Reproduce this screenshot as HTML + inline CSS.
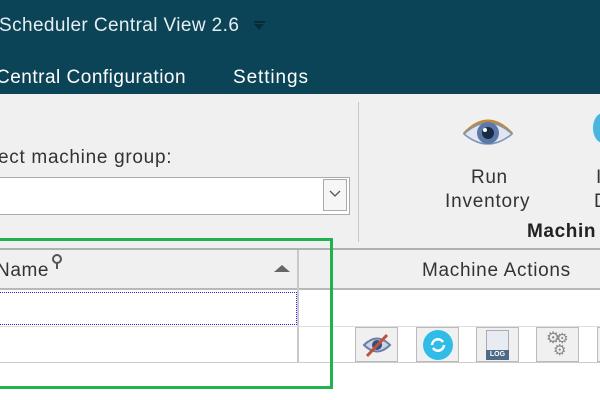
<!DOCTYPE html>
<html><head><style>
*{margin:0;padding:0;box-sizing:border-box}
body{width:600px;height:400px;overflow:hidden;background:#fff;font-family:"Liberation Sans",sans-serif;position:relative;color:#333}
#w{position:absolute;left:0;top:0;width:600px;height:400px;overflow:hidden}
.a{position:absolute;white-space:nowrap}
.t{font-size:19px;letter-spacing:0.6px}
</style></head><body><div id="w">
<div class="a" style="left:0;top:0;width:600px;height:94px;background:#0b4456"></div>
<div class="a" style="left:-1px;top:15px;font-size:19px;letter-spacing:0.4px;color:#e6eef1">Scheduler Central View 2.6</div>
<div class="a" style="left:254px;top:21px;width:11px;height:2px;background:#0a2a36"></div>
<div class="a" style="left:254px;top:24px;width:0;height:0;border-left:5.5px solid transparent;border-right:5.5px solid transparent;border-top:6px solid #0a2a36"></div>
<div class="a t" style="left:-4px;top:67px;color:#fff;letter-spacing:0.5px">Central Configuration</div>
<div class="a t" style="left:233px;top:67px;color:#fff;letter-spacing:0.9px">Settings</div>
<div class="a" style="left:0;top:94px;width:600px;height:155px;background:#f0f0f0"></div>
<div class="a" style="left:358px;top:102px;width:1px;height:140px;background:#c8c8c8"></div>
<div class="a t" style="left:-2px;top:147px;letter-spacing:0.7px">ect machine group:</div>
<div class="a" style="left:-2px;top:177px;width:352px;height:38px;background:#fff;border:1px solid #aaa"></div>
<div class="a" style="left:323px;top:179px;width:24px;height:32px;border:1px solid #aaa;background:#f6f6f6"></div>
<svg class="a" style="left:328px;top:189px" width="14" height="10"><path d="M2 2 L7 7 L12 2" stroke="#555" stroke-width="1.3" fill="none"/></svg>
<svg class="a" style="left:462px;top:112px" width="52" height="40" viewBox="0 0 52 40">
<path d="M2 22 Q26 -4 50 22" stroke="#c08a3a" stroke-width="3" fill="none"/>
<path d="M2 22 Q26 0 50 22 Q26 42 2 22Z" fill="#dfe6f0" stroke="#7d93b5" stroke-width="1.5"/>
<circle cx="26" cy="21" r="11" fill="#5b79a8"/><circle cx="26" cy="21" r="6" fill="#1a2a44"/><circle cx="23" cy="18" r="2" fill="#fff"/>
</svg>
<div class="a t" style="left:471px;top:167px">Run</div>
<div class="a t" style="left:445px;top:191px;letter-spacing:0.8px">Inventory</div>
<div class="a t" style="left:596px;top:167px">I</div>
<div class="a t" style="left:594px;top:191px">Dep</div>
<div class="a" style="left:593px;top:113px;width:20px;height:30px;border-radius:50%;background:#49b6e0"></div>
<div class="a t" style="left:527px;top:221px;font-weight:bold;color:#222">Machin</div>
<div class="a" style="left:0;top:248px;width:600px;height:2px;background:#b0b0b0"></div>
<div class="a" style="left:0;top:250px;width:600px;height:40px;background:#f0f0f0;border-bottom:2px solid #b8b8b8"></div>
<div class="a" style="left:297px;top:250px;width:2px;height:113px;background:#c8c8c8"></div>
<div class="a t" style="left:-4px;top:260px">Name</div>
<svg class="a" style="left:51px;top:254px" width="12" height="16"><circle cx="6" cy="5" r="4" fill="none" stroke="#555" stroke-width="2"/><path d="M6 9V15" stroke="#555" stroke-width="2"/></svg>
<div class="a" style="left:274px;top:265px;width:0;height:0;border-left:8px solid transparent;border-right:8px solid transparent;border-bottom:7px solid #666"></div>
<div class="a t" style="left:422px;top:260px;letter-spacing:0.7px">Machine Actions</div>
<div class="a" style="left:-2px;top:292px;width:299px;height:33px;border:1px dotted #2222ee"></div>
<div class="a" style="left:0;top:326px;width:600px;height:1px;background:#ddd"></div>
<div class="a" style="left:0;top:362px;width:600px;height:1px;background:#ccc"></div>
<div class="a" style="left:355px;top:327px;width:43px;height:35px;background:#f0f0f0;border:1px solid #bbb"></div>
<svg class="a" style="left:362px;top:332px" width="30" height="26"><path d="M2 13 Q15 0 28 13 Q15 26 2 13Z" fill="#c9d3e3" stroke="#6a7fa8" stroke-width="2"/><circle cx="15" cy="13" r="5" fill="#3a4e78"/><path d="M5 24 L25 3" stroke="#c05040" stroke-width="3"/></svg>
<div class="a" style="left:416px;top:327px;width:43px;height:35px;background:#f0f0f0;border:1px solid #bbb"></div>
<div class="a" style="left:423px;top:330px;width:30px;height:30px;border-radius:50%;background:#2fbde8"></div>
<svg class="a" style="left:428px;top:335px" width="20" height="20"><path d="M4 10 A6 6 0 0 1 15 7M16 10 A6 6 0 0 1 5 13" stroke="#fff" stroke-width="2.5" fill="none"/></svg>
<div class="a" style="left:476px;top:327px;width:43px;height:35px;background:#f0f0f0;border:1px solid #bbb"></div>
<div class="a" style="left:486px;top:330px;width:23px;height:30px;background:#e8ecf2;border:1px solid #aab"></div>
<div class="a" style="left:486px;top:350px;width:23px;height:10px;background:#4d6a86;color:#fff;font-size:7px;font-weight:bold;text-align:center;line-height:10px">LOG</div>
<div class="a" style="left:536px;top:327px;width:43px;height:35px;background:#f0f0f0;border:1px solid #bbb"></div>
<div class="a" style="left:546px;top:328px;font-size:16px;color:#888">⚙</div>
<div class="a" style="left:556px;top:330px;font-size:14px;color:#888">⚙</div>
<div class="a" style="left:553px;top:341px;font-size:15px;color:#888">⚙</div>
<div class="a" style="left:597px;top:327px;width:3px;height:35px;background:#f0f0f0;border:1px solid #bbb;border-right:0"></div>
<div class="a" style="left:-5px;top:238px;width:338px;height:151px;border:3px solid #22b14c"></div>
</div></body></html>
